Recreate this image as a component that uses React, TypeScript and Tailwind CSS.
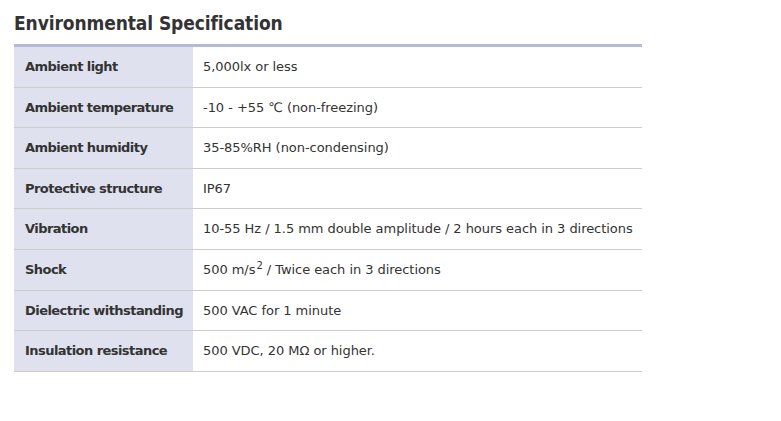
import React from "react";

const rows: { label: string; value: React.ReactNode }[] = [
  { label: "Ambient light", value: "5,000lx or less" },
  { label: "Ambient temperature", value: "-10 - +55 ℃ (non-freezing)" },
  { label: "Ambient humidity", value: "35-85%RH (non-condensing)" },
  { label: "Protective structure", value: "IP67" },
  { label: "Vibration", value: "10-55 Hz / 1.5 mm double amplitude / 2 hours each in 3 directions" },
  {
    label: "Shock",
    value: (
      <>
        500 m/s<sup className="text-[10px] relative -top-[5px] align-baseline ml-[1px] mr-[4px]">2</sup>/ Twice each in 3 directions
      </>
    ),
  },
  { label: "Dielectric withstanding", value: "500 VAC for 1 minute" },
  { label: "Insulation resistance", value: "500 VDC, 20 MΩ or higher." },
];

export default function App() {
  return (
    <div className="bg-white w-[781px] h-[421px] text-[#333] pl-[14px] pt-[10px]" style={{ fontFamily: "'DejaVu Sans', Verdana, sans-serif" }}>
      <h2
        className="text-[19px] font-bold leading-[26px] text-[#333] tracking-[-0.1px]"
        style={{ fontFamily: "'DejaVu Sans Condensed', 'DejaVu Sans', sans-serif" }}
      >
        Environmental Specification
      </h2>
      <div className="w-[628px] mt-[8px] border-t-[3px] border-[#b5badb]">
        {rows.map((r) => (
          <div key={r.label} className="flex h-[40.6px] border-b border-[#cccccc] text-[13px]">
            <div className="w-[179px] shrink-0 bg-[#dfe1ee] font-bold flex items-center pl-[11px] tracking-[-0.55px]">
              {r.label}
            </div>
            <div className="flex-1 flex items-center pl-[10px] tracking-[-0.05px]">
              <span>{r.value}</span>
            </div>
          </div>
        ))}
      </div>
    </div>
  );
}
